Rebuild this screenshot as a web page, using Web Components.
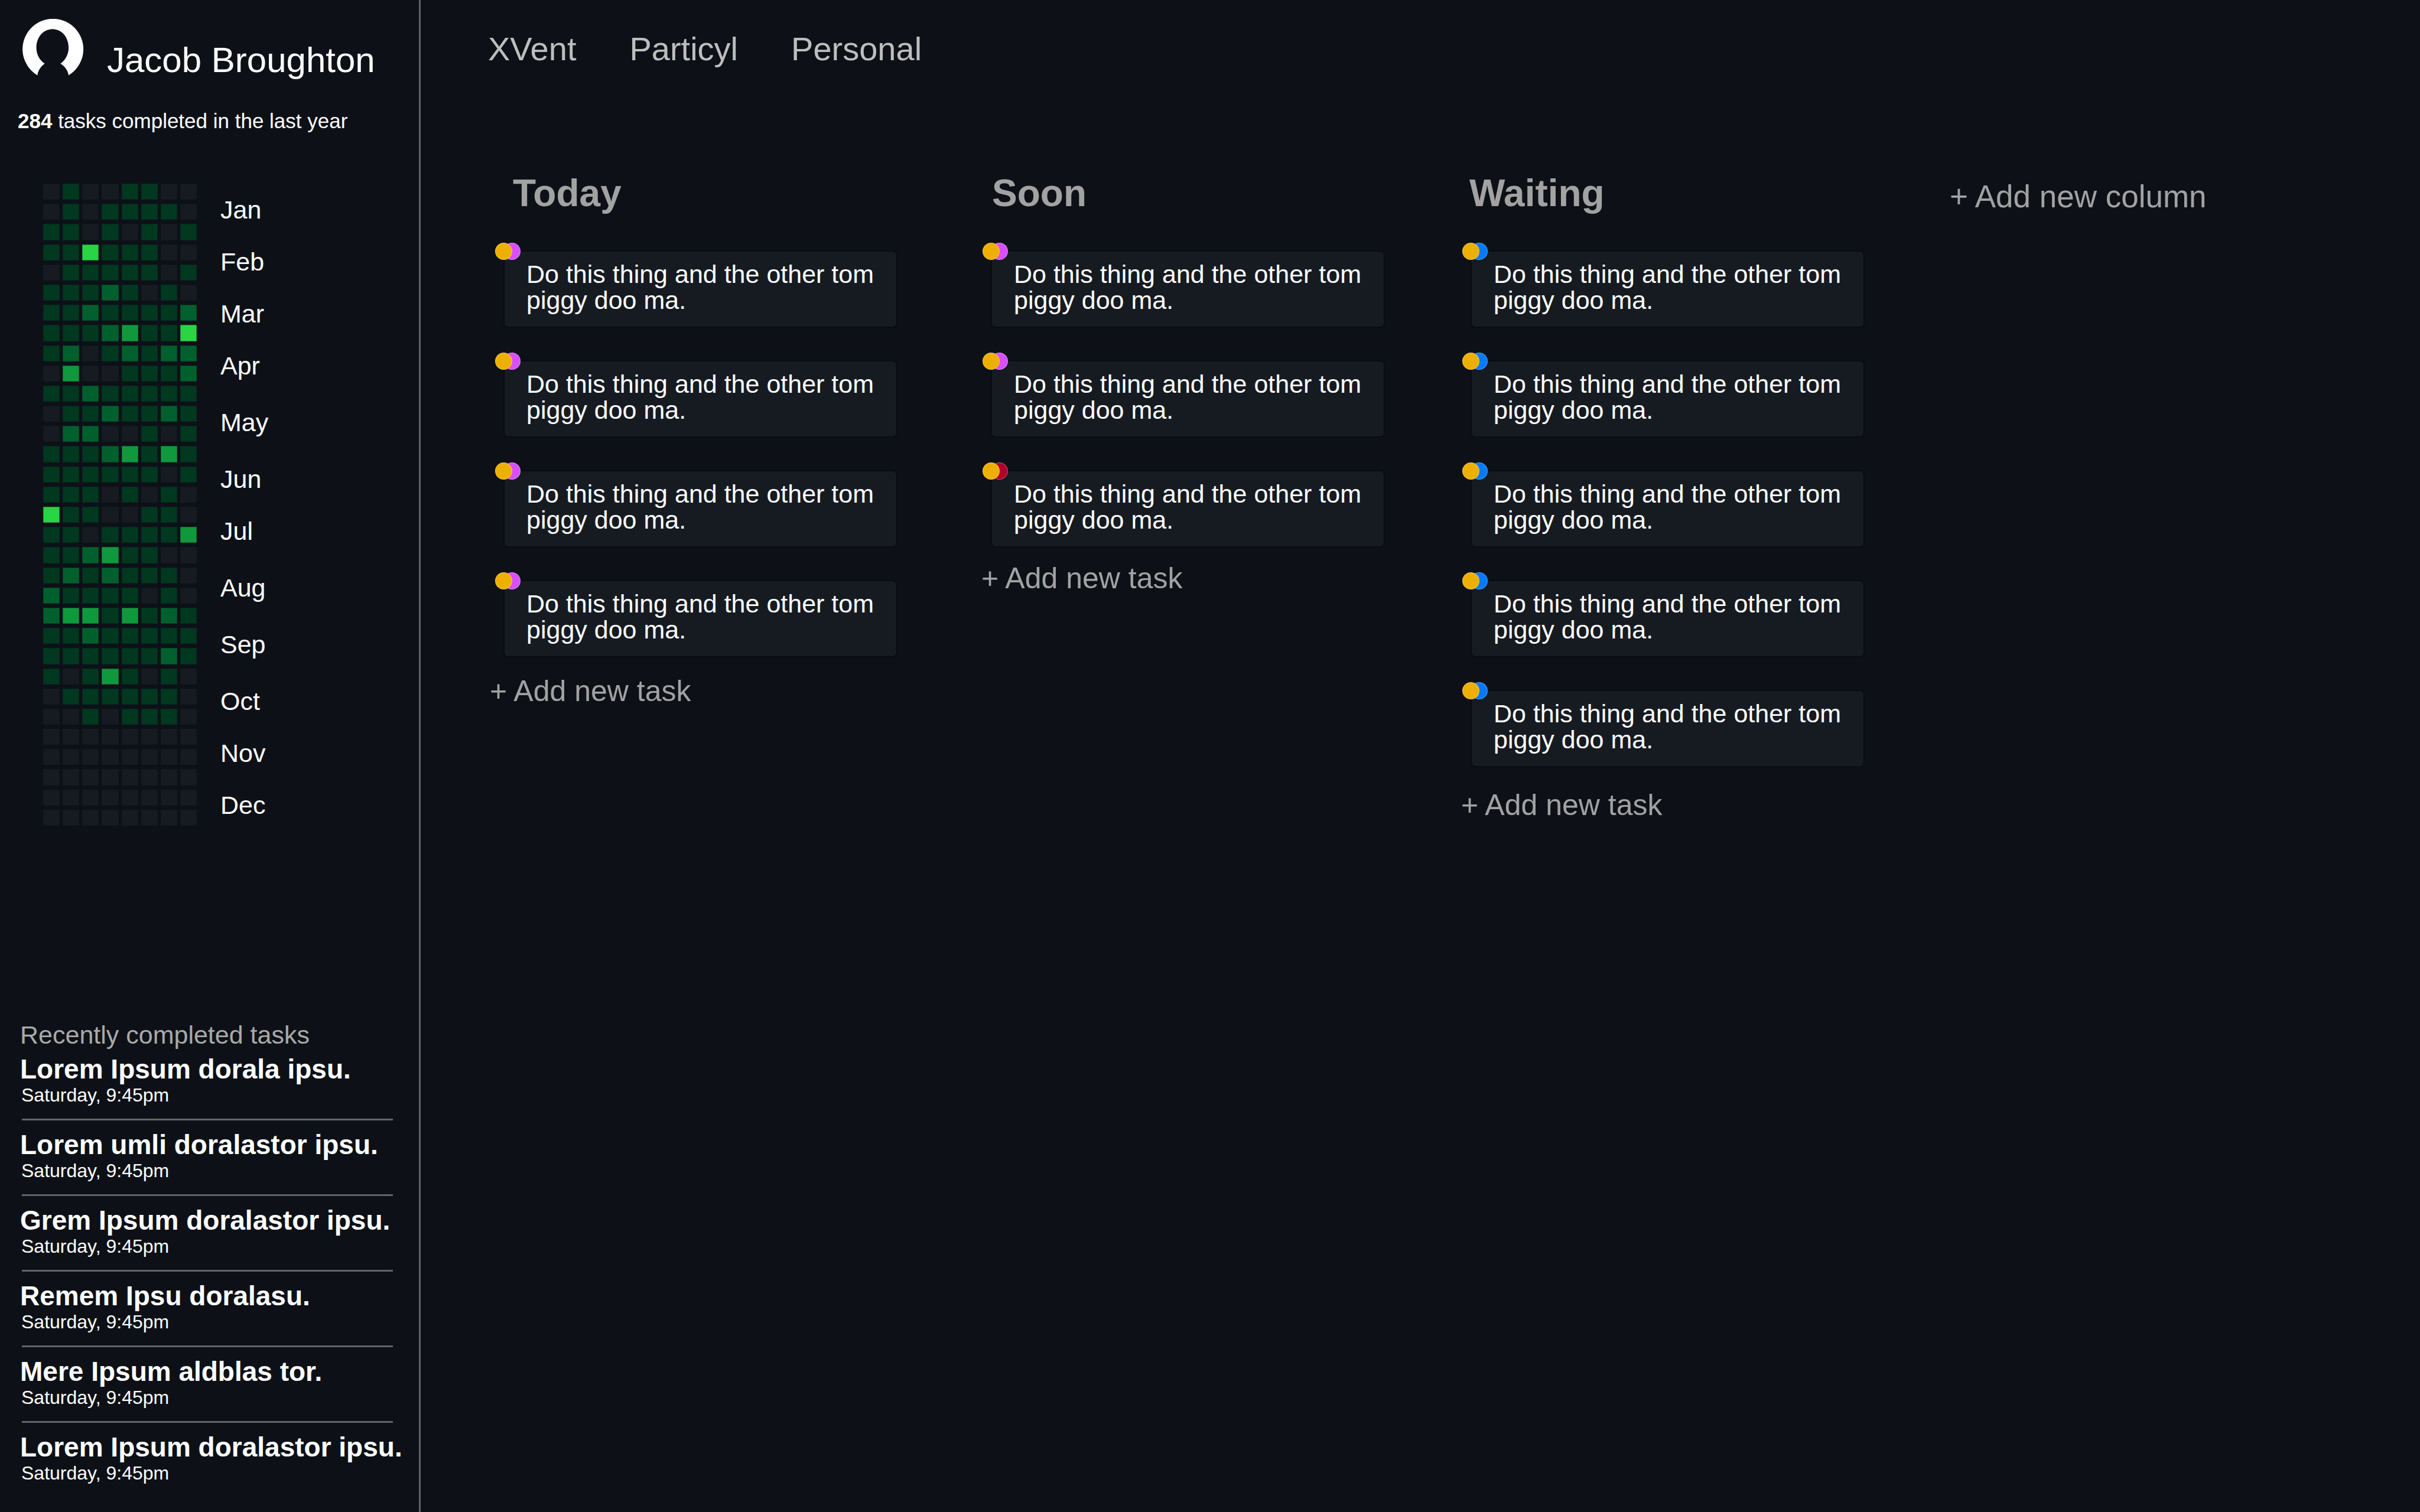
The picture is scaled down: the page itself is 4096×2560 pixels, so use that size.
<!DOCTYPE html>
<html lang="en">
<head>
<meta charset="utf-8">
<title>Task board</title>
<style>
  html { background: #0d1117; }
  body {
    margin: 0;
    background: #0d1117;
    color: #fff;
    font-family: "Liberation Sans", Arial, sans-serif;
  }
  task-column.today   { --inset: 23px; --gutter: 142px; --title-inset: 39px; --footer-gap: 29px; }
  task-column.soon    { --inset: 16px; --gutter: 129px; --title-inset: 18px; --footer-gap: 24px; }
  task-column.waiting { --inset: 16px; --gutter: 144px; --title-inset: 14px; --footer-gap: 36px; }
</style>
</head>
<body>
<task-app>
  <side-bar slot="side">
    <user-profile slot="profile" count="284">Jacob Broughton</user-profile>
    <year-activity slot="activity"></year-activity>
    <recent-tasks slot="recent">
      <recent-task when="Saturday, 9:45pm">Lorem Ipsum dorala ipsu.</recent-task>
      <recent-task when="Saturday, 9:45pm">Lorem umli doralastor ipsu.</recent-task>
      <recent-task when="Saturday, 9:45pm">Grem Ipsum doralastor ipsu.</recent-task>
      <recent-task when="Saturday, 9:45pm">Remem Ipsu doralasu.</recent-task>
      <recent-task when="Saturday, 9:45pm">Mere Ipsum aldblas tor.</recent-task>
      <recent-task when="Saturday, 9:45pm">Lorem Ipsum doralastor ipsu.</recent-task>
    </recent-tasks>
  </side-bar>
  <project-tabs slot="tabs"></project-tabs>
  <task-board slot="board">
    <task-column class="today" heading="Today">
      <task-card tag="purple">Do this thing and the other tom piggy doo ma.</task-card>
      <task-card tag="purple">Do this thing and the other tom piggy doo ma.</task-card>
      <task-card tag="purple">Do this thing and the other tom piggy doo ma.</task-card>
      <task-card tag="purple">Do this thing and the other tom piggy doo ma.</task-card>
    </task-column>
    <task-column class="soon" heading="Soon">
      <task-card tag="purple">Do this thing and the other tom piggy doo ma.</task-card>
      <task-card tag="purple">Do this thing and the other tom piggy doo ma.</task-card>
      <task-card tag="red">Do this thing and the other tom piggy doo ma.</task-card>
    </task-column>
    <task-column class="waiting" heading="Waiting">
      <task-card tag="blue">Do this thing and the other tom piggy doo ma.</task-card>
      <task-card tag="blue">Do this thing and the other tom piggy doo ma.</task-card>
      <task-card tag="blue">Do this thing and the other tom piggy doo ma.</task-card>
      <task-card tag="blue">Do this thing and the other tom piggy doo ma.</task-card>
      <task-card tag="blue">Do this thing and the other tom piggy doo ma.</task-card>
    </task-column>
  </task-board>
</task-app>

<script>
  const define = (name, render) => customElements.define(name, class extends HTMLElement {
    constructor() {
      super();
      this.attachShadow({ mode: 'open' });
    }
    connectedCallback() {
      this.shadowRoot.innerHTML = render(this);
    }
  });

  define('task-app', () => `
    <style>
      :host { display: flex; min-height: 100vh; }
      main { flex: 1; min-width: 0; display: flex; flex-direction: column; }
    </style>
    <slot name="side"></slot>
    <main><slot name="tabs"></slot><slot name="board"></slot></main>`);

  define('side-bar', () => `
    <style>
      :host {
        display: flex; flex-direction: column; flex: none;
        box-sizing: border-box; width: 712px; border-right: 3px solid #5f6266;
      }
    </style>
    <slot name="profile"></slot>
    <slot name="activity"></slot>
    <slot name="recent"></slot>`);

  define('user-profile', el => `
    <style>
      :host { display: block; padding: 32px 0 0; }
      header { display: flex; align-items: flex-end; gap: 39px; padding-left: 38px; }
      svg { display: block; width: 104px; height: 96px; }
      h1 { margin: 0; font-size: 60px; line-height: 52px; font-weight: 400; white-space: nowrap; }
      p { margin: 57px 0 0; padding-left: 30px; font-size: 35px; line-height: 40px; white-space: nowrap; }
    </style>
    <header>
      <svg viewBox="0 0 121 113" aria-hidden="true">
        <path fill="#fff" d="M29 112.3A60.6 60.6 0 1 1 91.2 112.3C89.7 103 84 94.5 75 89.3C85.3 82 91.3 70.5 91.3 57.5C91.3 36.5 77.5 20.3 59.2 20.3C41 20.3 27 36.5 27 57.5C27 70.5 33 82 43.7 89.3C36 94.5 30.5 103 29 112.3Z"/>
      </svg>
      <h1><slot></slot></h1>
    </header>
    <p><b>${el.getAttribute('count')}</b> tasks completed in the last year</p>`);

  const WEEKS = [
    '01001100', '01011110', '11010101', '11411100', '01111101', '11121010', '11211112', '11123114',
    '12012122', '03001112', '11211111', '01121121', '02200101', '11123131', '11111101', '11101010',
    '41100110', '11011113', '11231100', '12121110', '21111010', '23313121', '11211111', '11111121',
    '10131010', '01111110', '00101110', '00000000', '00000000', '00000000', '00000000', '00000000'
  ];
  const MONTHS = ['Jan', 'Feb', 'Mar', 'Apr', 'May', 'Jun', 'Jul', 'Aug', 'Sep', 'Oct', 'Nov', 'Dec'];
  const LONG = new Set(['May', 'Jun', 'Aug', 'Sep', 'Oct']);

  define('year-activity', () => `
    <style>
      :host { display: flex; align-items: flex-start; gap: 40px; padding: 86px 0 0 73px; }
      .grid {
        display: grid; grid-template-columns: repeat(8, 1fr); grid-auto-rows: 1fr;
        gap: 7px 5px; width: 260px; height: 1087px;
      }
      i { background: #161b22; box-shadow: inset 0 0 0 1px rgba(13, 17, 23, .3); }
      .l1 { background: #003820; }
      .l2 { background: #00602d; }
      .l3 { background: #10983d; }
      .l4 { background: #27d545; }
      ul { margin: 0; padding: 0; list-style: none; font-size: 43px; line-height: 88px; }
      .long { padding-top: 8px; }
    </style>
    <div class="grid">${WEEKS.join('').split('').map(n => `<i class="l${n}"></i>`).join('')}</div>
    <ul>${MONTHS.map(m => `<li${LONG.has(m) ? ' class="long"' : ''}>${m}</li>`).join('')}</ul>`);

  define('recent-tasks', () => `
    <style>
      :host { display: block; margin-top: auto; padding: 0 0 48px 34px; }
      h2 { margin: 0 0 8px; font-size: 43px; line-height: 48px; font-weight: 400; color: #a9a9a9; }
    </style>
    <h2>Recently completed tasks</h2>
    <slot></slot>`);

  define('recent-task', el => `
    <style>
      :host { display: block; }
      h3 { margin: 0; font-size: 46px; line-height: 52px; white-space: nowrap; }
      time { display: block; padding-left: 2px; font-size: 32px; line-height: 36px; }
      hr { margin: 22px 44px 15px 3px; border: 0; height: 3px; background: #626467; }
      :host(:last-child) hr { display: none; }
    </style>
    <h3><slot></slot></h3>
    <time>${el.getAttribute('when')}</time>
    <hr>`);

  define('project-tabs', () => `
    <style>
      :host { display: block; }
      nav { display: flex; gap: 90px; padding: 51px 0 0 114px; font-size: 56px; line-height: 64px; }
      a { color: #bebebe; text-decoration: none; }
    </style>
    <nav>
      <a href="#xvent">XVent</a>
      <a href="#particyl">Particyl</a>
      <a href="#personal">Personal</a>
    </nav>`);

  define('task-board', () => `
    <style>
      :host {
        display: grid; grid-template-columns: 832fr 812fr 827fr 796fr; align-items: start;
        padding: 176px 0 0 117px;
      }
      button {
        justify-self: start; margin: 12px 0 0; padding: 0; border: 0; background: none;
        font: 53px/60px "Liberation Sans", Arial, sans-serif; color: #a2a2a3; white-space: nowrap;
      }
    </style>
    <slot></slot>
    <button type="button">+ Add new column</button>`);

  define('task-column', el => `
    <style>
      :host { display: block; min-width: 0; }
      h2 {
        margin: 0; padding-left: var(--title-inset);
        font-size: 64px; line-height: 72px; color: #a2a2a3;
      }
      .cards {
        display: flex; flex-direction: column; gap: 55px;
        margin: 61px var(--gutter) var(--footer-gap) var(--inset);
      }
      button {
        display: block; padding: 0; border: 0; background: none;
        font: 50px/56px "Liberation Sans", Arial, sans-serif; color: #a2a2a3; white-space: nowrap;
      }
    </style>
    <h2>${el.getAttribute('heading')}</h2>
    <div class="cards"><slot></slot></div>
    <button type="button">+ Add new task</button>`);

  define('task-card', el => `
    <style>
      :host {
        display: block; position: relative; box-sizing: border-box;
        padding: 16px 34px 23px 37px; border: 2px solid #090c10; border-radius: 8px;
        background: #161b22; font-size: 43px; line-height: 44px;
      }
      p { margin: 0; }
      .dots { position: absolute; left: -16px; top: -15px; display: flex; }
      .dots i {
        box-sizing: border-box; width: 29px; height: 29px; border-radius: 50%;
        border: 1px solid rgba(255, 255, 255, .3);
      }
      .owner { position: relative; z-index: 1; background: #eeb000; }
      .tag { margin-left: -15px; }
      .purple { background: #d94fff; }
      .red { background: #b2002d; }
      .blue { background: #007aff; }
    </style>
    <p><slot></slot></p>
    <span class="dots"><i class="owner"></i><i class="tag ${el.getAttribute('tag')}"></i></span>`);
</script>
</body>
</html>
